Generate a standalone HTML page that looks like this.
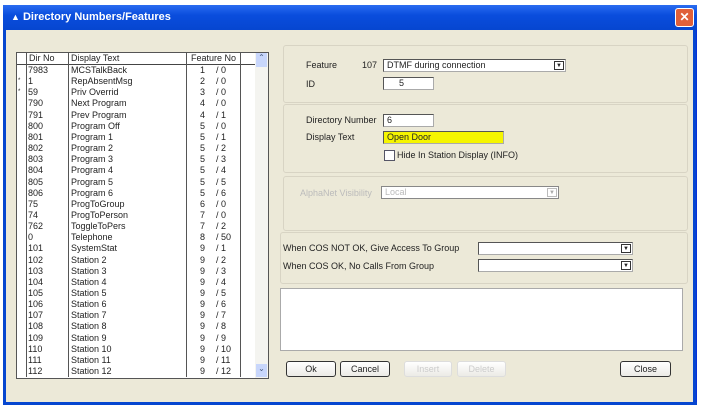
<!DOCTYPE html>
<html><head><style>
body{margin:0;width:702px;height:410px;background:#fff;position:relative;overflow:hidden;font-family:"Liberation Sans",sans-serif;font-size:9px;color:#222}
.a{position:absolute}
.win{left:3px;top:5px;width:694px;height:400px;background:#ece9d8;border:1px solid #0831d9;box-sizing:border-box}
.title{left:3px;top:5px;width:694px;height:25px;background:linear-gradient(#2a6cf0,#0a4ddd 40%,#0646d0);color:#fff;font-weight:bold;font-size:11px;line-height:25px}
.fld{background:#fff;border:1px solid #555;border-right-color:#aaa;border-bottom-color:#aaa;box-sizing:border-box;padding-left:3px;line-height:11px;font-size:9px}
.dd{position:absolute;right:1px;top:1px;width:10px;height:9px;border:1px solid #333;box-sizing:border-box;font-size:6px;text-align:center;line-height:8px;background:#fff}
.grp{border:1px solid #d8d4c4;border-radius:3px;box-sizing:border-box}
.btn{border:1px solid #333;border-radius:3px;background:linear-gradient(#fff,#ecebe6);box-sizing:border-box;text-align:center;line-height:14px;font-size:9px}
.row{position:absolute;left:0;height:11px;line-height:11px;width:240px}
.row span{position:absolute}
</style></head><body>
<div class="a win"></div>
<div class="a title"><span style="margin-left:8px;font-size:9px">▲</span> Directory Numbers/Features</div>
<div class="a" style="left:675px;top:8px;width:17px;height:17px;background:#e0603a;border:1px solid #fff;border-radius:3px;color:#fff;font-weight:bold;text-align:center;line-height:17px;font-size:12px">✕</div>
<div class="a" style="left:693px;top:30px;width:3px;height:374px;background:#0646d0"></div>
<div class="a" style="left:3px;top:30px;width:3px;height:374px;background:#0646d0"></div>
<div class="a" style="left:3px;top:402px;width:694px;height:3px;background:#0646d0"></div>

<!-- list -->
<div class="a" style="left:16px;top:52px;width:253px;height:327px;background:#fff;border:1px solid #555;box-sizing:border-box"></div>
<div class="a" style="left:17px;top:53px;width:238px;height:11px;border-bottom:1px solid #444;line-height:10px">
<span class="a" style="left:9px;top:0;width:1px;height:324px;background:#555"></span>
<span class="a" style="left:51px;top:0;width:1px;height:324px;background:#555"></span>
<span class="a" style="left:169px;top:0;width:1px;height:324px;background:#555"></span>
<span class="a" style="left:223px;top:0;width:1px;height:324px;background:#555"></span>
<span class="a" style="left:12px">Dir No</span><span class="a" style="left:54px">Display Text</span><span class="a" style="left:174px">Feature No</span></div>
<div class="a" style="left:255px;top:53px;width:13px;height:325px;background:#f4f4f0"></div>
<div class="a" style="left:256px;top:53px;width:11px;height:14px;background:#c8d6fb;color:#4d6185;font-size:8px;text-align:center">⌃</div>
<div class="a" style="left:256px;top:364px;width:11px;height:13px;background:#c8d6fb;color:#4d6185;font-size:8px;text-align:center">⌄</div>
<div class="a" id="rows" style="left:17px;top:65px;width:238px;height:312px">
</div>
<script>
var d=[["7983","MCSTalkBack","1","0"],["1","RepAbsentMsg","2","0"],["59","Priv Overrid","3","0"],["790","Next Program","4","0"],["791","Prev Program","4","1"],["800","Program Off","5","0"],["801","Program 1","5","1"],["802","Program 2","5","2"],["803","Program 3","5","3"],["804","Program 4","5","4"],["805","Program 5","5","5"],["806","Program 6","5","6"],["75","ProgToGroup","6","0"],["74","ProgToPerson","7","0"],["762","ToggleToPers","7","2"],["0","Telephone","8","50"],["101","SystemStat","9","1"]];
for(var i=2;i<=12;i++)d.push([String(100+i),"Station "+i,"9",String(i)]);
var h="";d.forEach(function(r,i){h+='<div class="row" style="top:'+(i*11.15)+'px">'+(i==1||i==2?'<span style="left:1px;font-size:6px">*</span>':'')+'<span style="left:11px">'+r[0]+'</span><span style="left:54px">'+r[1]+'</span><span style="left:183px">'+r[2]+'</span><span style="left:199px">/ '+r[3]+'</span></div>'});
document.getElementById("rows").innerHTML=h;
</script>

<!-- right groups -->
<div class="a grp" style="left:283px;top:45px;width:405px;height:58px"></div>
<div class="a grp" style="left:283px;top:104px;width:405px;height:69px"></div>
<div class="a grp" style="left:283px;top:176px;width:405px;height:55px"></div>
<div class="a grp" style="left:280px;top:232px;width:408px;height:52px"></div>
<div class="a" style="left:306px;top:60px">Feature</div>
<div class="a" style="left:362px;top:60px">107</div>
<div class="a fld" style="left:383px;top:59px;width:183px;height:13px">DTMF during connection<div class="dd">▼</div></div>
<div class="a" style="left:306px;top:79px">ID</div>
<div class="a fld" style="left:383px;top:77px;width:51px;height:13px;padding-left:15px">5</div>
<div class="a" style="left:306px;top:115px">Directory Number</div>
<div class="a fld" style="left:383px;top:114px;width:51px;height:13px">6</div>
<div class="a" style="left:306px;top:132px">Display Text</div>
<div class="a fld" style="left:383px;top:131px;width:121px;height:13px;background:#f5f500">Open Door</div>
<div class="a" style="left:384px;top:150px;width:9px;height:9px;border:1px solid #556;background:#fff"></div>
<div class="a" style="left:397px;top:150px">Hide In Station Display (INFO)</div>
<div class="a" style="left:300px;top:188px;color:#bbb">AlphaNet Visibility</div>
<div class="a fld" style="left:381px;top:186px;width:178px;height:13px;color:#bbb;border-color:#888">Local<div class="dd" style="border-color:#bbb;color:#aaa">▼</div></div>
<div class="a" style="left:283px;top:243px">When COS NOT OK, Give Access To Group</div>
<div class="a" style="left:283px;top:261px">When COS OK, No Calls From Group</div>
<div class="a fld" style="left:478px;top:242px;width:155px;height:13px"><div class="dd">▼</div></div>
<div class="a fld" style="left:478px;top:259px;width:155px;height:13px"><div class="dd">▼</div></div>
<div class="a" style="left:280px;top:288px;width:403px;height:63px;background:#fff;border:1px solid #aaa;box-sizing:border-box"></div>
<div class="a grp" style="left:280px;top:352px;width:408px;height:33px;border:none"></div>
<div class="a btn" style="left:286px;top:361px;width:50px;height:16px">Ok</div>
<div class="a btn" style="left:340px;top:361px;width:50px;height:16px">Cancel</div>
<div class="a btn" style="left:404px;top:361px;width:48px;height:16px;border-color:#ddd;color:#ccc">Insert</div>
<div class="a btn" style="left:457px;top:361px;width:49px;height:16px;border-color:#ddd;color:#ccc">Delete</div>
<div class="a btn" style="left:620px;top:361px;width:51px;height:16px">Close</div>
</body></html>
